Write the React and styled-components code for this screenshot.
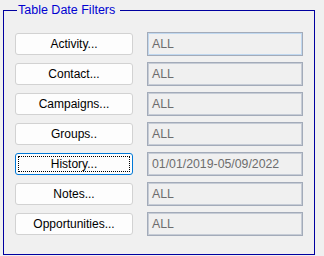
import React from "react";
import styled, { createGlobalStyle } from "styled-components";

const filters = [
  { label: "Activity...", value: "ALL", hot: true },
  { label: "Contact...", value: "ALL" },
  { label: "Campaigns...", value: "ALL" },
  { label: "Groups..", value: "ALL" },
  { label: "History...", value: "01/01/2019-05/09/2022", focused: true },
  { label: "Notes...", value: "ALL" },
  { label: "Opportunities...", value: "ALL" },
];

const App = () => {
  return (
    <>
      <GlobalStyle />
      <GroupBox>
        <Legend>Table Date Filters</Legend>
        <Rows>
          {filters.map((f) => (
            <Row key={f.label}>
              <FilterButton $focused={f.focused}>{f.label}</FilterButton>
              <ValueBox $hot={f.hot}>{f.value}</ValueBox>
            </Row>
          ))}
        </Rows>
      </GroupBox>
    </>
  );
};

export default App;

// Styled Components
const GlobalStyle = createGlobalStyle`
  html, body {
    margin: 0;
    padding: 0;
    background: #f0f0f0;
    font-family: "Liberation Sans", Arial, sans-serif;
  }
`;

const GroupBox = styled.fieldset`
  box-sizing: border-box;
  width: 312px;
  height: 252px;
  margin: 3px 0 0 3px;
  padding: 0;
  border: 1px solid #0000a0;
  min-width: 0;
`;

const Legend = styled.legend`
  margin-left: 13px;
  padding: 0 5px 0 1px;
  font-size: 12.5px;
  line-height: 14px;
  color: #0000d0;
`;

const Rows = styled.div`
  display: flex;
  flex-direction: column;
  gap: 6px;
  padding: 15px 0 0 11px;
`;

const Row = styled.div`
  display: grid;
  grid-template-columns: 118px 156px;
  column-gap: 14px;
  align-items: center;
  height: 24px;
`;

const FilterButton = styled.button`
  position: relative;
  box-sizing: border-box;
  height: 22px;
  margin: 0;
  padding: 0;
  background: #fdfdfd;
  border: 1px solid ${(p) => (p.$focused ? "#0078d7" : "#d2d2d2")};
  border-radius: 3px;
  font-family: inherit;
  font-size: 12px;
  color: #000;
  cursor: pointer;
  &::after {
    content: "";
    display: ${(p) => (p.$focused ? "block" : "none")};
    position: absolute;
    inset: 2px;
    border: 1px dotted #000;
  }
`;

const ValueBox = styled.div`
  box-sizing: border-box;
  height: 24px;
  display: flex;
  align-items: center;
  padding-left: 4px;
  border: 1px solid #a3abb9;
  box-shadow: inset 0 0 0 1px ${(p) => (p.$hot ? "#c0d8f0" : "#c6ccd6")};
  font-size: 12.3px;
  color: #6d6d6d;
  white-space: nowrap;
`;
